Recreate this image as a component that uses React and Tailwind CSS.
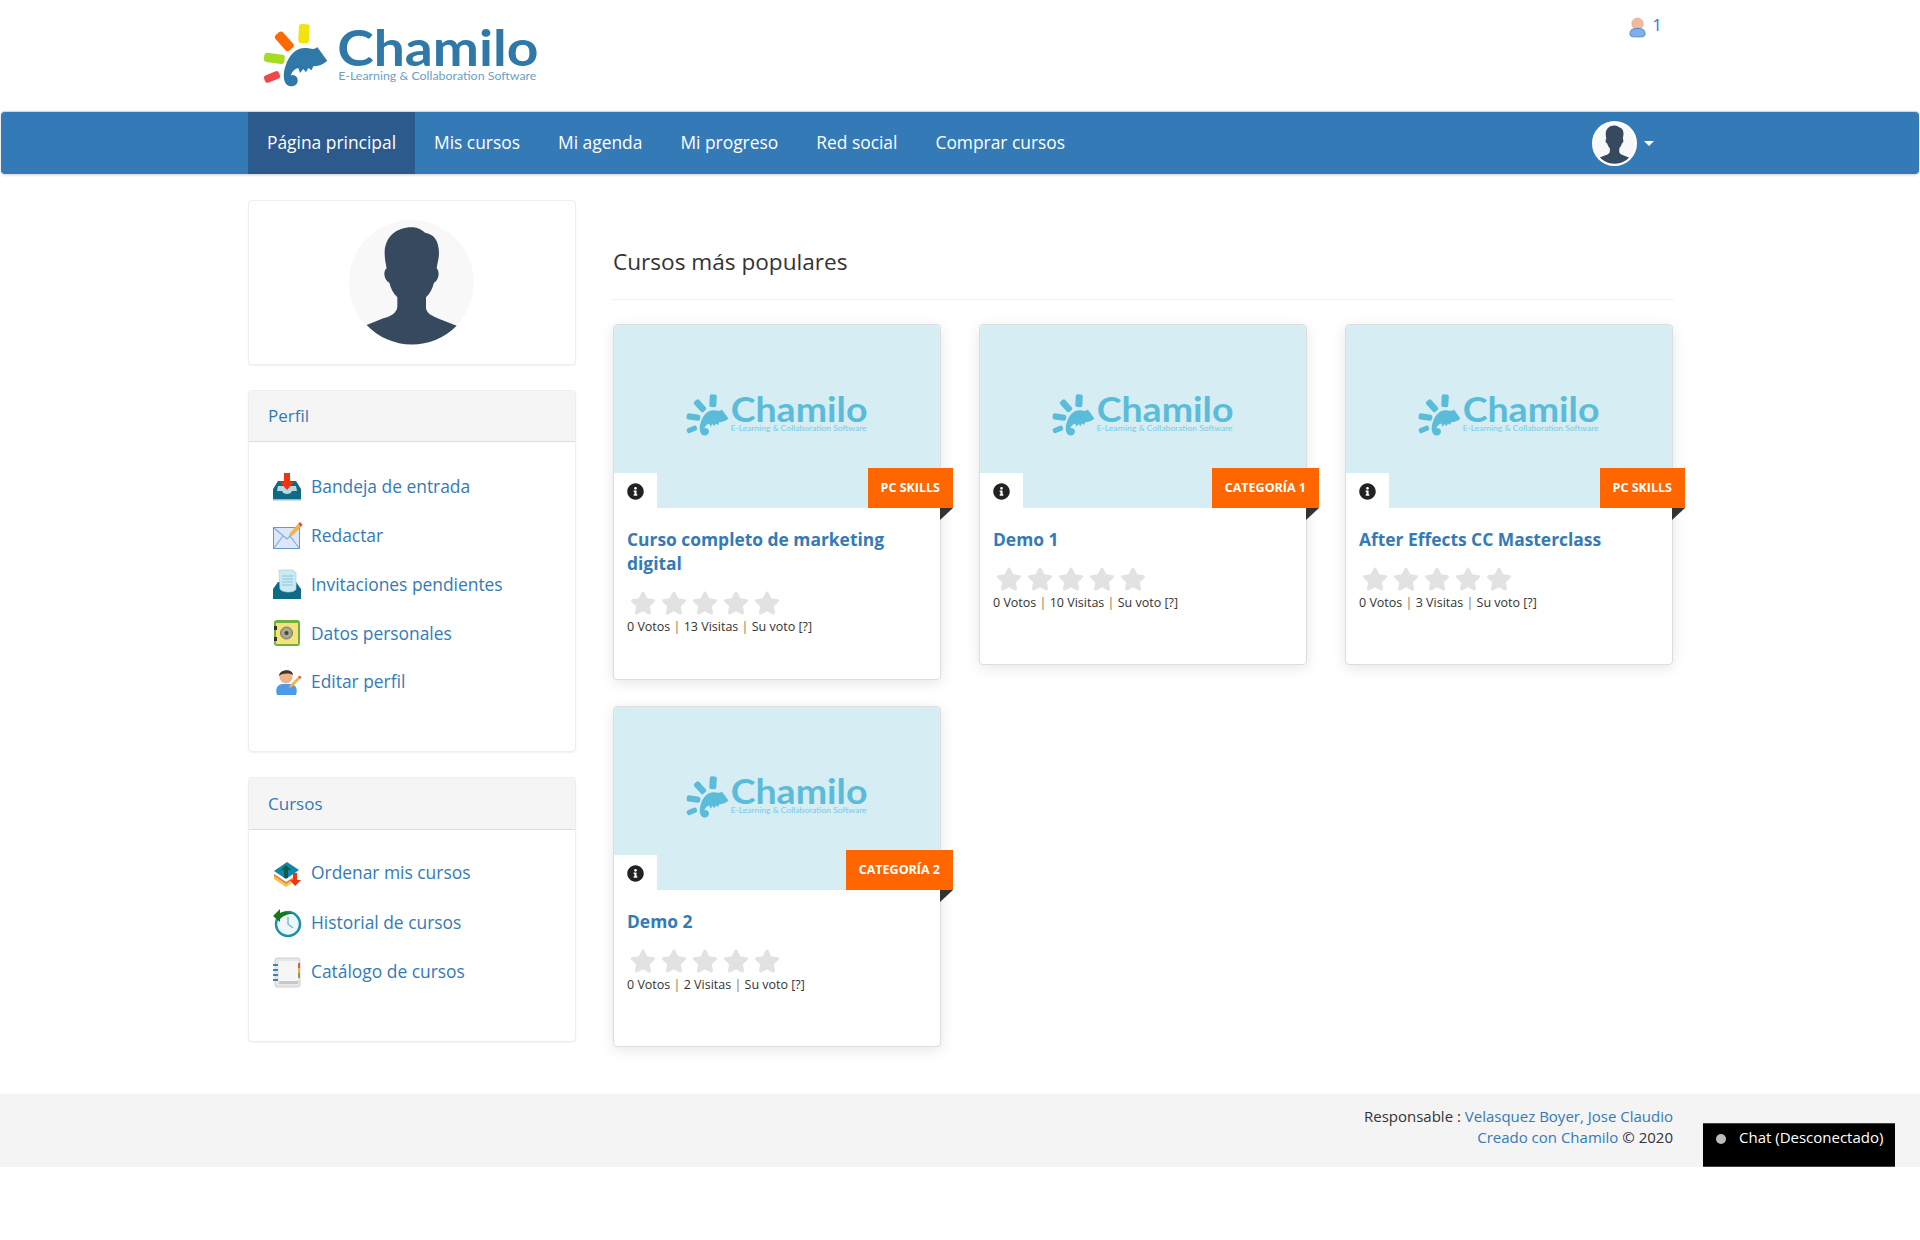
import React from 'react';
import { FaInfoCircle, FaStar } from 'react-icons/fa';

const Logo = ({ mono, className }) => {
  const blue = mono ? '#5bbcd9' : '#2f78a8';
  const sub = mono ? '#7ccbe2' : '#6c9fc4';
  return (
    <svg viewBox="60 40 850 240" className={className}>
      <rect x="176" y="73" width="32" height="58" rx="9" fill={mono ? blue : '#f2e20f'} transform="rotate(3 192 102)" />
      <rect x="102" y="110" width="62" height="30" rx="9" fill={mono ? blue : '#ff6a00'} transform="rotate(48 133 125)" />
      <rect x="72" y="162" width="62" height="28" rx="9" fill={mono ? blue : '#a5dc22'} transform="rotate(8 103 176)" />
      <rect x="72" y="220" width="48" height="24" rx="9" fill={mono ? blue : '#f04848'} transform="rotate(-22 96 232)" />
      <path
        fill={blue}
        d="M262 183 L232 142 C225 150 215 148 200 145 C170 142 148 165 138 195 C126 225 130 260 155 260 C178 260 180 228 158 226 C146 226 143 242 152 246 C148 228 158 208 175 205 L180 220 L190 208 L198 218 L205 205 L215 212 L220 200 C235 200 250 195 262 183 Z"
      />
      <text x={mono ? 272 : 292} y="198" textLength={mono ? 622 : 604} lengthAdjust="spacingAndGlyphs" fontSize="152" fill={blue} className="font-['Lato',sans-serif] font-bold">Chamilo</text>
      <text x={mono ? 272 : 295} y="240" textLength={mono ? 618 : 595} lengthAdjust="spacingAndGlyphs" fontSize="36" fill={sub} className="font-['Lato',sans-serif]">E-Learning &amp; Collaboration Software</text>
    </svg>
  );
};

const Silhouette = ({ className }) => (
  <svg viewBox="327 90 375 375" className={className}>
    <circle cx="514" cy="277" r="187" fill="#f8f8f8" />
    <path
      fill="#36495f"
      d="M434 190 C434 140 470 112 515 112 C535 112 545 120 555 128 C580 132 597 150 597 190 C597 205 592 220 590 235 C600 245 597 270 582 278 C578 295 570 310 558 322 L558 355 C560 370 575 378 600 388 L650 407 A187 187 0 0 1 380 405 L430 385 C455 378 470 368 472 350 L472 322 C460 310 452 295 448 278 C432 270 428 245 440 235 C437 220 434 205 434 190 Z"
    />
  </svg>
);

const InboxIcon = () => (
  <svg viewBox="0 0 32 32" className="w-8 h-8 shrink-0">
    <path fill="#0f6a85" d="M7 11 H25 L30 19 V30 H2 V19 Z" />
    <path fill="#b7d7e2" d="M7 16 H25 L26 21 H21 C20 25 12 25 11 21 H6 Z" />
    <path fill="#f0340f" d="M13 3 H19 V12 H23 L16 20 L9 12 H13 Z" />
    <rect x="2" y="29" width="28" height="1.5" fill="#8fc0d0" />
  </svg>
);

const MailIcon = () => (
  <svg viewBox="0 0 32 32" className="w-8 h-8 shrink-0">
    <rect x="2.5" y="8.5" width="26" height="21" fill="#dbe8fa" stroke="#6f94cc" />
    <path fill="none" stroke="#8aa9d8" strokeWidth="1.2" d="M3 9 L16 20 L28 9 M3 29 L12 17 M28 29 L19 17" />
    <path fill="#f0b24a" d="M19 14 L27 5 L30 8 L22 16 L18 17 Z" />
    <path fill="#e9503c" d="M27 5 L29 3 L31.5 5.5 L30 8 Z" />
  </svg>
);

const InviteIcon = () => (
  <svg viewBox="0 0 32 32" className="w-8 h-8 shrink-0">
    <path fill="#0f6a85" d="M7 14 H25 L30 21 V31 H2 V21 Z" />
    <path fill="#cbe9f2" stroke="#a5d4e2" strokeWidth="0.7" d="M8 2 H22 L25 5 V21 C24 25 11 25 9 21 Z" />
    <path stroke="#8cc4d8" strokeWidth="1.2" d="M11 8 H22 M11 11 H22 M11 14 H22 M11 17 H22" />
  </svg>
);

const SafeIcon = () => (
  <svg viewBox="0 0 32 32" className="w-8 h-8 shrink-0">
    <rect x="3" y="3" width="26" height="26" rx="3" fill="#6fb23c" />
    <rect x="5" y="6" width="22" height="21" fill="#f5e27c" />
    <rect x="3" y="9" width="3" height="4" fill="#333" />
    <rect x="3" y="20" width="3" height="4" fill="#333" />
    <circle cx="15.5" cy="16" r="6" fill="#a8a890" stroke="#77775f" />
    <circle cx="15.5" cy="16" r="2" fill="#44443a" />
  </svg>
);

const EditUserIcon = () => (
  <svg viewBox="0 0 32 32" className="w-8 h-8 shrink-0">
    <path fill="#4d9be8" d="M6 30 C4 24 6 20 11 19 H20 C25 20 27 24 25 30 Z" />
    <circle cx="15" cy="12" r="6.5" fill="#f0b48c" />
    <path fill="#4a3326" d="M8 11 C8 4 22 3 22 10 C18 8 12 8 8 11 Z" />
    <path fill="#f0b24a" d="M19 20 L27 12 L29 14 L21 22 L18 23 Z" />
    <path fill="#e9503c" d="M27 12 L28.5 10.5 L30.5 12.5 L29 14 Z" />
  </svg>
);

const OrderIcon = () => (
  <svg viewBox="0 0 32 32" className="w-8 h-8 shrink-0">
    <path fill="#f6c445" d="M3 19 L15 27 L26 20 V23 L15 30 L3 22 Z" />
    <path fill="#ef7a3c" d="M3 17 L15 25 L26 18 V20 L15 27 L3 19 Z" />
    <path fill="#1186a8" d="M3 14 L16 5 L28 13 L15 22 Z" />
    <path fill="#0a5c45" d="M13 21 V13 H10 L15 8 L20 13 H17 V21 Z" />
    <path fill="#f0340f" d="M22 16 H26 V23 H30 L24 29 L19 23 H22 Z" />
  </svg>
);

const HistoryIcon = () => (
  <svg viewBox="0 0 32 32" className="w-8 h-8 shrink-0">
    <circle cx="17" cy="18" r="12" fill="#eef7fa" stroke="#1a8fae" strokeWidth="2.5" />
    <path stroke="#7fb6c6" strokeWidth="1.4" fill="none" d="M17 11 V18 L22 22" />
    <path fill="#157a1c" d="M2 10 L9 3 V7 C13 5 20 6 22 8 C16 8 12 10 9 13 V16 Z" />
  </svg>
);

const CatalogIcon = () => (
  <svg viewBox="0 0 32 32" className="w-8 h-8 shrink-0">
    <rect x="4" y="2" width="25" height="29" rx="2" fill="#e6e6e6" stroke="#d0d0d0" />
    <rect x="8" y="5" width="19" height="22" fill="#f6f6f6" />
    <rect x="8" y="25" width="19" height="3" fill="#c8c8c8" />
    <rect x="27" y="7" width="2" height="5" fill="#e65a3c" />
    <rect x="27" y="12" width="2" height="5" fill="#e8b23c" />
    <rect x="27" y="17" width="2" height="5" fill="#6fb23c" />
    <path stroke="#3a88ad" strokeWidth="2" d="M2 9 H7 M2 14 H7 M2 19 H7 M2 24 H7" />
  </svg>
);

const perfilLinks = [
  { label: 'Bandeja de entrada', icon: <InboxIcon /> },
  { label: 'Redactar', icon: <MailIcon /> },
  { label: 'Invitaciones pendientes', icon: <InviteIcon /> },
  { label: 'Datos personales', icon: <SafeIcon /> },
  { label: 'Editar perfil', icon: <EditUserIcon /> },
];

const cursosLinks = [
  { label: 'Ordenar mis cursos', icon: <OrderIcon /> },
  { label: 'Historial de cursos', icon: <HistoryIcon /> },
  { label: 'Catálogo de cursos', icon: <CatalogIcon /> },
];

const courses = [
  { title: 'Curso completo de marketing digital', tag: 'PC SKILLS', visits: 13 },
  { title: 'Demo 1', tag: 'CATEGORÍA 1', visits: 10 },
  { title: 'After Effects CC Masterclass', tag: 'PC SKILLS', visits: 3 },
  { title: 'Demo 2', tag: 'CATEGORÍA 2', visits: 2 },
];

const navItems = ['Mis cursos', 'Mi agenda', 'Mi progreso', 'Red social', 'Comprar cursos'];

const SidePanel = ({ title, links, headClass, rowClass, bodyClass }) => (
  <div className="border border-[#eeeeee] rounded bg-white shadow-[0_1px_2px_rgba(0,0,0,0.06)]">
    <div className={`flex items-center pl-[19px] bg-[#f5f5f5] border-b border-[#dddddd] text-[#337ab7] text-[17px] rounded-t ${headClass}`}>
      {title}
    </div>
    <div className={bodyClass}>
      {links.map(link => (
        <a key={link.label} className={`flex items-center gap-2 pl-[22px] text-[17.4px] text-[#337ab7] ${rowClass}`}>
          {link.icon}
          <span>{link.label}</span>
        </a>
      ))}
    </div>
  </div>
);

const CourseCard = ({ course }) => (
  <div className="relative bg-white border border-[#dddddd] rounded shadow-[0_3px_14px_rgba(0,0,0,0.1)]">
    <div className="relative h-[183px] bg-[#d5edf3] rounded-t flex items-center justify-center pb-[6px]">
      <Logo mono className="w-[187px] h-[53px]" />
      <div className="absolute left-0 bottom-0 w-[43px] h-[35px] bg-white flex items-center justify-center pt-[2px]">
        <FaInfoCircle className="text-[#222222] text-[17px]" />
      </div>
      <div className="absolute -right-[13px] bottom-0 h-[40px] px-[13px] bg-[#ff6600] text-white text-[12.5px] font-bold flex items-center">
        {course.tag}
      </div>
      <div className="absolute -right-[13px] top-full w-0 h-0 border-t-[12px] border-t-[#333333] border-r-[13px] border-r-transparent"></div>
    </div>
    <div className="min-h-[156px] px-[13px] pt-[19px] pb-[44px]">
      <a className="block text-[17.4px] leading-6 font-bold text-[#337ab7]">{course.title}</a>
      <div className="flex gap-[5px] mt-[15px] ml-[3px] text-[26px] text-[#e2e2e2]">
        <FaStar /><FaStar /><FaStar /><FaStar /><FaStar />
      </div>
      <div className="text-[12.5px] leading-4 text-[#333333] mt-[3px]">
        0 Votos <span className="text-[#8c7355]">|</span> {course.visits} Visitas <span className="text-[#8c7355]">|</span> Su voto [?]
      </div>
    </div>
  </div>
);

export default function App() {
  return (
    <div className="font-['Open_Sans',sans-serif] text-[#333333] bg-white min-h-[1240px]">
      <header className="h-[111px] pl-[260px] pr-[258px] flex justify-between">
        <Logo className="w-[283px] h-[80px] mt-[13px]" />
        <div className="flex items-start gap-[6px] pt-[14px] text-[#337ab7] text-[17px] leading-[22px]">
          <svg viewBox="0 0 18 22" className="w-[17px] h-[21px] mt-[3px]">
            <circle cx="9" cy="7" r="6" fill="#f3b9a0" stroke="#d99a80" strokeWidth="0.6" />
            <path fill="#7bb0ee" stroke="#4470b8" strokeWidth="0.8" d="M1 18 C1 13 4 12 9 12 C14 12 17 13 17 18 C17 21 14 21 9 21 C4 21 1 21 1 18 Z" />
          </svg>
          <span>1</span>
        </div>
      </header>

      <nav className="mx-px h-[63px] bg-[#337ab7] rounded border-t border-[#d9d9d9] shadow-[0_1px_3px_rgba(0,0,0,0.2)] pl-[247px] pr-[265px] flex items-stretch justify-between text-white text-[17.4px]">
        <div className="flex">
          <a className="px-[19px] pb-[2px] bg-[#2d5a8c] flex items-center">Página principal</a>
          {navItems.map(item => (
            <a key={item} className="px-[19px] pb-[2px] flex items-center">{item}</a>
          ))}
        </div>
        <div className="flex items-center gap-[7px]">
          <Silhouette className="w-[45px] h-[45px] rounded-full border-2 border-white bg-white" />
          <div className="w-0 h-0 border-x-[5px] border-x-transparent border-t-[5px] border-t-white"></div>
        </div>
      </nav>

      <div className="ml-[248px] w-[1425px] mt-[26px] flex gap-[37px] items-start">
        <aside className="w-[328px] shrink-0 flex flex-col gap-[25px]">
          <div className="h-[165px] border border-[#eeeeee] rounded bg-white shadow-[0_1px_2px_rgba(0,0,0,0.06)] flex items-center justify-center pr-[2px]">
            <Silhouette className="w-[125px] h-[125px]" />
          </div>
          <SidePanel title="Perfil" links={perfilLinks} headClass="h-[51px]" rowClass="h-[48.75px]" bodyClass="pt-[20px] pb-[45px]" />
          <SidePanel title="Cursos" links={cursosLinks} headClass="h-[52px]" rowClass="h-[49.5px]" bodyClass="pt-[18px] pb-[45px]" />
        </aside>

        <main className="flex-1">
          <h2 className="text-[22.6px] leading-[30px] mt-[47px] pb-[22px] border-b border-[#eeeeee]">Cursos más populares</h2>
          <div className="grid grid-cols-3 gap-x-[38px] gap-y-[26px] items-start mt-[24px]">
            {courses.map(course => (
              <CourseCard key={course.title} course={course} />
            ))}
          </div>
        </main>
      </div>

      <footer className="relative mt-[47px] h-[73px] bg-[#f4f4f4] pt-[12px] pr-[247px] text-right text-[15px] leading-[21px]">
        <div>Responsable : <a className="text-[#337ab7]">Velasquez Boyer, Jose Claudio</a></div>
        <div><a className="text-[#337ab7]">Creado con Chamilo</a> © 2020</div>
        <div className="absolute right-[25px] bottom-0 w-[192px] h-[44px] bg-black border-t border-b border-[#444444] text-white text-left flex items-start pt-[3px] pl-[13px] gap-[13px]">
          <span className="w-[10px] h-[10px] rounded-full bg-[#bbbbbb] mt-[7px]"></span>
          <span>Chat (Desconectado)</span>
        </div>
      </footer>
    </div>
  );
}
